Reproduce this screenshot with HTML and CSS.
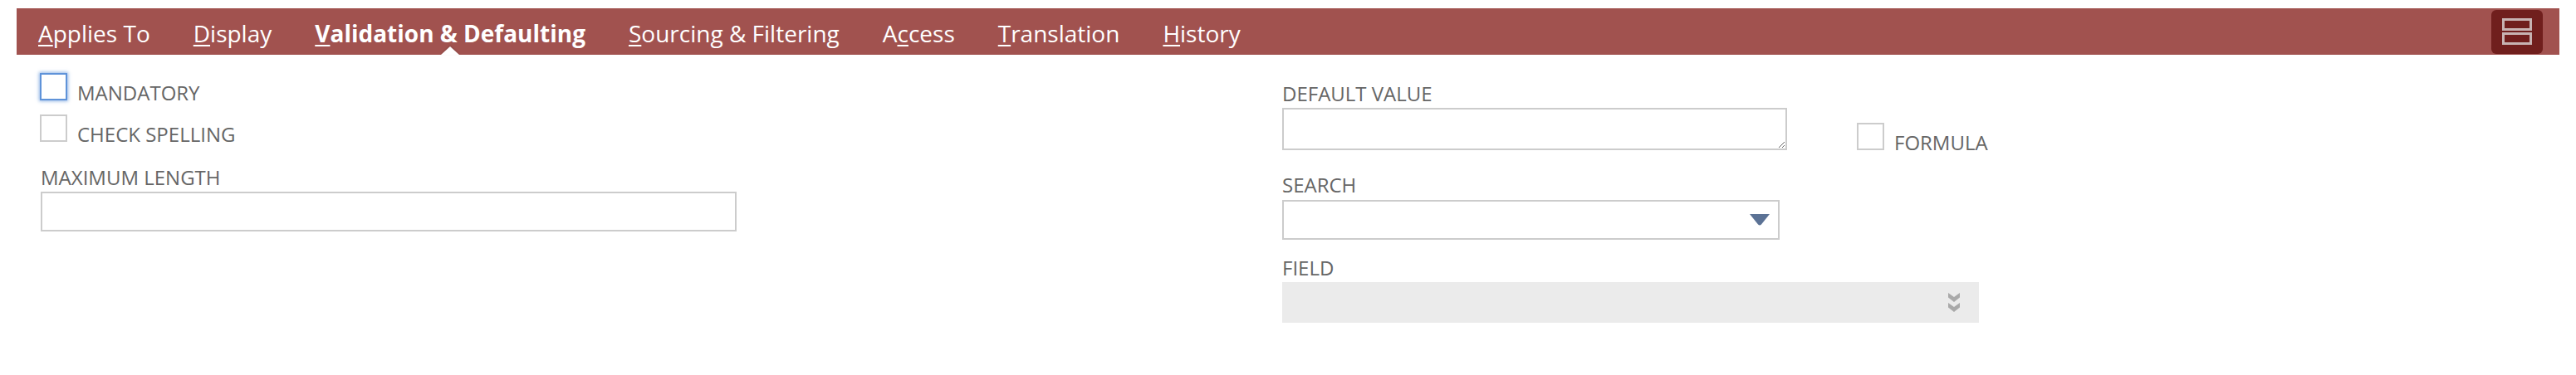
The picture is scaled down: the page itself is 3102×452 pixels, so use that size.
FILE: index.html
```html
<!DOCTYPE html>
<html>
<head>
	<meta charset="utf-8"/>
	<title>Custom Field</title>
	<link rel="stylesheet" href="styles.css">
</head>
<body>
	<div class="page">
		<div class="tabbar">
			<a class="tab"><u>A</u>pplies To</a>
			<a class="tab"><u>D</u>isplay</a>
			<a class="tab active"><u>V</u>alidation &amp; Defaulting</a>
			<a class="tab"><u>S</u>ourcing &amp; Filtering</a>
			<a class="tab">A<u>c</u>cess</a>
			<a class="tab"><u>T</u>ranslation</a>
			<a class="tab"><u>H</u>istory</a>
			<div class="layout-btn">
				<svg width="36" height="32" viewBox="0 0 36 32">
					<rect x="1.5" y="1.5" width="33" height="12" fill="none" stroke="#c7b3b2" stroke-width="3"/>
					<rect x="1.5" y="18.5" width="33" height="12" fill="none" stroke="#c7b3b2" stroke-width="3"/>
				</svg>
			</div>
		</div>

		<div class="content">
			<div class="col-left">
				<div class="check-row">
					<span class="checkbox focused"></span>
					<span class="check-label">MANDATORY</span>
				</div>
				<div class="check-row">
					<span class="checkbox"></span>
					<span class="check-label">CHECK SPELLING</span>
				</div>
				<label class="field-label first">MAXIMUM LENGTH</label>
				<input type="text" class="text-input maxlen">
			</div>

			<div class="col-right">
				<label class="field-label">DEFAULT VALUE</label>
				<div class="default-row">
					<textarea class="text-area"></textarea>
					<div class="check-row formula">
						<span class="checkbox"></span>
						<span class="check-label">FORMULA</span>
					</div>
				</div>

				<label class="field-label search-label">SEARCH</label>
				<div class="select">
					<svg class="select-arrow" width="24" height="14" viewBox="0 0 24 14">
						<path d="M0 0 L24 0 L14 12.5 Q12 14.5 10 12.5 Z" fill="#5b7295"/>
					</svg>
				</div>

				<label class="field-label field-name">FIELD</label>
				<div class="select disabled">
					<svg class="select-arrow" width="14" height="24" viewBox="0 0 14 24">
						<path d="M0 0 L7 5 L14 0 L14 5.5 L7 11 L0 5.5 Z" fill="#a9a9a9"/>
						<path d="M0 12 L7 17 L14 12 L14 17.5 L7 23 L0 17.5 Z" fill="#a9a9a9"/>
					</svg>
				</div>
			</div>
		</div>
	</div>
</body>
</html>
```

FILE: styles.css
```css
html, body {height: 100%;}
body {margin: 0; background: #fff; font-family: "Open Sans", "Liberation Sans", sans-serif;}
.page {padding: 10px 20px;}

/* tabs */
.tabbar {display: flex; align-items: center; height: 56px; background-color: #a1524f;}
.tab {position: relative; padding: 4px 26px 0; line-height: 52px; font-size: 28px; color: #fff; cursor: pointer; white-space: nowrap;}
.tab u {text-decoration-thickness: 2px; text-underline-offset: 3px;}
.tab.active {font-weight: 700;}
.tab.active:after {
	content: "";
	position: absolute;
	left: 50%;
	bottom: 0;
	margin-left: -11px;
	border-left: 11px solid transparent;
	border-right: 11px solid transparent;
	border-bottom: 10px solid #fff;
	filter: drop-shadow(0 -1px 1px rgba(0,0,0,0.15));
}
.layout-btn {margin-left: auto; margin-right: 20px; width: 62px; height: 53px; border-radius: 6px; background-color: #701f1d;
	display: flex; align-items: center; justify-content: center;}

/* form */
.content {display: flex; padding: 22px 0 0 28px;}
.col-left {width: 1496px; display: flex; flex-direction: column; align-items: flex-start;}
.col-right {display: flex; flex-direction: column; align-items: flex-start; margin-top: 10px;}

.check-row {display: flex; align-items: baseline; height: 33px; margin-bottom: 17px;}
.checkbox {display: inline-block; width: 33px; height: 33px; box-sizing: border-box; border: 2px solid #cccccc; background: #fff;}
.checkbox.focused {border-color: #5f93d9; box-shadow: 0 0 4px 1px rgba(95,147,217,0.7);}
.check-label {margin-left: 12px; font-size: 24px; line-height: 24px; color: #666;}

.field-label {display: block; font-size: 24px; line-height: 30px; color: #666; margin-bottom: 2px;}
.field-label.first {margin-top: 11px; margin-left: 1px;}
.text-input {box-sizing: border-box; height: 48px; border: 2px solid #cccccc; outline: none; margin: 0; padding: 0 8px;}
.maxlen {width: 838px; margin-left: 1px;}

.default-row {display: flex; align-items: flex-end;}
.text-area {display: block; box-sizing: border-box; width: 608px; height: 51px; margin: 0; border: 2px solid #cccccc; outline: none; resize: both;}
.check-row.formula {margin: 0 0 0 84px;}

.search-label {margin-top: 27px; margin-bottom: 3px;}
.select {position: relative; box-sizing: border-box; width: 599px; height: 48px; border: 2px solid #cccccc; background: #fff;}
.select-arrow {position: absolute; right: 10px; top: 50%; transform: translateY(-50%);}
.field-name {margin-top: 19px;}
.select.disabled {width: 839px; height: 49px; border: none; background: #ebebeb;}
.select.disabled .select-arrow {right: 23px;}
```
